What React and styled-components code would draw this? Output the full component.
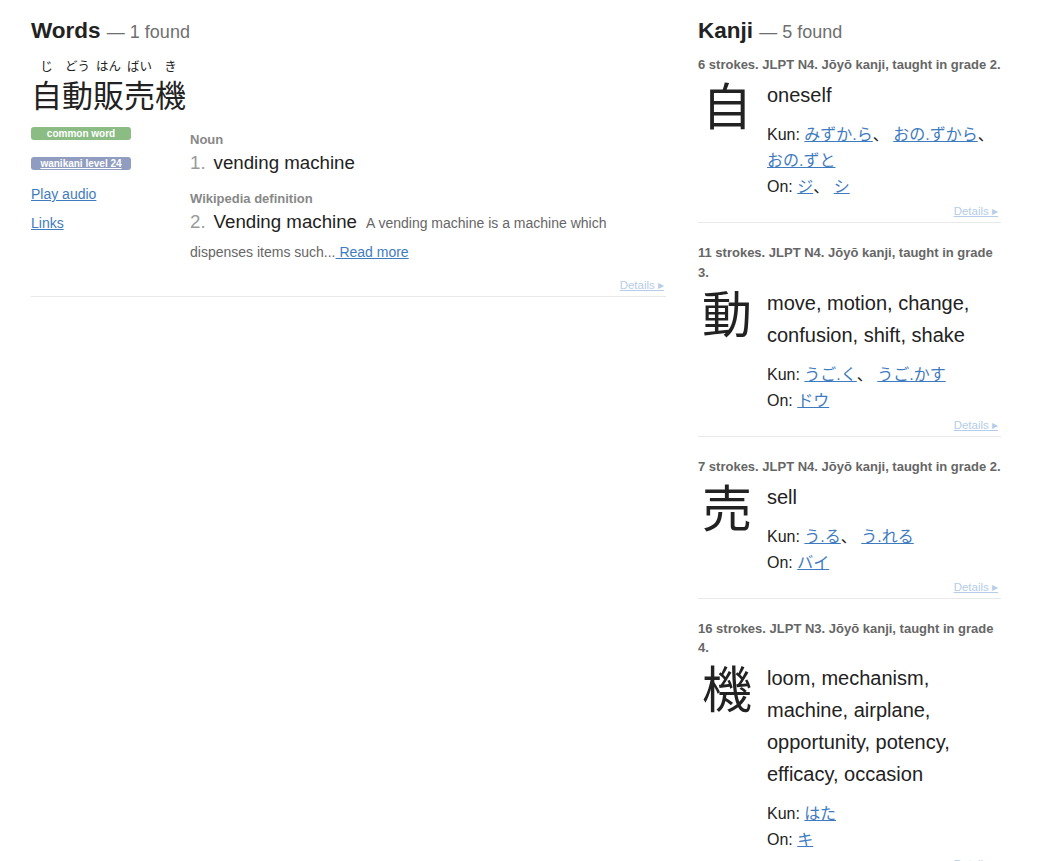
import React from "react";
import styled, { createGlobalStyle } from "styled-components";

const Global = createGlobalStyle`
  html, body { margin: 0; padding: 0; background: #fff; }
  body {
    font-family: "Liberation Sans", Arial, "Noto Sans CJK JP", sans-serif;
    color: #222;
  }
  a { color: #3f7cbf; }
`;

const Page = styled.div`
  display: grid;
  grid-template-columns: 635px 303px;
  column-gap: 32px;
  padding: 17px 0 0 31px;
  align-items: start;
`;

const Column = styled.section`
  min-width: 0;
`;

const Heading = styled.h2`
  margin: 0;
  font-size: 22.5px;
  line-height: 28px;
  font-weight: bold;
  color: #222;
`;

const Count = styled.span`
  font-size: 18px;
  font-weight: normal;
  color: #6f6f6f;
`;

/* ---------- Words ---------- */

const WordBlock = styled.article`
  border-bottom: 1px solid #e9e9e9;
  padding-bottom: 4px;
`;

const Representation = styled.div`
  margin-top: 11px;
  font-family: "Noto Sans CJK JP", sans-serif;
`;

const FuriRow = styled.div`
  display: flex;
  padding-left: 0;
  height: 18px;
`;

const Furi = styled.span`
  width: 31px;
  text-align: center;
  font-size: 12.5px;
  line-height: 18px;
  color: #222;
  white-space: nowrap;
`;

const WordText = styled.div`
  font-size: 31px;
  line-height: 38px;
  color: #222;
`;

const WordBody = styled.div`
  display: flex;
  margin-top: 14px;
`;

const Meta = styled.div`
  width: 159px;
  flex: none;
  display: flex;
  flex-direction: column;
  align-items: flex-start;
`;

const Badge = styled.span`
  display: block;
  width: 100px;
  height: 13px;
  border-radius: 3px;
  background: ${(p) => p.$bg};
  color: #fff;
  font-size: 10px;
  line-height: 13px;
  font-weight: bold;
  text-align: center;
  margin-bottom: 17px;
  text-decoration: ${(p) => (p.$link ? "underline" : "none")};
`;

const MetaLink = styled.a`
  font-size: 14px;
  line-height: 20px;
  color: #3f7cbf;
  text-decoration: underline;
  margin-top: ${(p) => p.$mt || 0}px;
`;

const Meanings = styled.div`
  flex: 1;
  padding-top: 4px;
`;

const Tag = styled.div`
  font-size: 13px;
  line-height: 18px;
  font-weight: bold;
  color: #888;
  margin-top: ${(p) => p.$mt || 0}px;
`;

const MeaningRow = styled.div`
  font-size: 18.7px;
  line-height: 28.5px;
  color: #222;
`;

const Num = styled.span`
  color: #999;
  margin-right: 8px;
`;

const Abstract = styled.span`
  font-size: 14px;
  color: #666;
  margin-left: 9px;
`;

const ReadMore = styled.a`
  font-size: 14px;
  color: #3f7cbf;
`;

const DetailsRow = styled.div`
  display: flex;
  justify-content: flex-end;
  margin-top: ${(p) => p.$mt || 0}px;
  padding-right: ${(p) => p.$pr || 2}px;
`;

const DetailsLink = styled.a`
  font-size: 11.5px;
  line-height: 13px;
  color: #b5cde7;
  text-decoration: underline;
`;

/* ---------- Kanji ---------- */

const KanjiBlock = styled.article`
  border-bottom: 1px solid #e9e9e9;
  padding-bottom: 4px;
  margin-top: ${(p) => (p.$first ? 9 : 20)}px;
`;

const Info = styled.div`
  font-size: 13px;
  line-height: 19.5px;
  font-weight: bold;
  color: #666;
`;

const KanjiRow = styled.div`
  display: flex;
  margin-top: 4.5px;
`;

const Char = styled.div`
  width: 58px;
  flex: none;
  margin-right: 11px;
  text-align: center;
  font-family: "Noto Sans CJK JP", sans-serif;
  font-size: 50px;
  line-height: 48px;
  color: #222;
`;

const KanjiDetails = styled.div`
  flex: 1;
  min-width: 0;
`;

const KanjiMeanings = styled.div`
  font-size: 20px;
  line-height: 32px;
  color: #222;
`;

const Readings = styled.div`
  margin-top: 11px;
  font-size: 16px;
  line-height: 26px;
  color: #222;
`;

const ReadingLine = styled.div`
  line-height: 26px;
`;

const Reading = styled.a`
  color: #3f7cbf;
  text-decoration: underline;
  vertical-align: top;
`;

const Sep = styled.span`
  vertical-align: top;
`;

const words = {
  furigana: ["じ", "どう", "はん", "ばい", "き"],
  text: "自動販売機",
};

const kanji = [
  {
    c: "自",
    info: "6 strokes. JLPT N4. Jōyō kanji, taught in grade 2.",
    meanings: "oneself",
    kun: ["みずか.ら", "おの.ずから", "おの.ずと"],
    on: ["ジ", "シ"],
  },
  {
    c: "動",
    info: "11 strokes. JLPT N4. Jōyō kanji, taught in grade 3.",
    meanings: "move, motion, change, confusion, shift, shake",
    kun: ["うご.く", "うご.かす"],
    on: ["ドウ"],
  },
  {
    c: "売",
    info: "7 strokes. JLPT N4. Jōyō kanji, taught in grade 2.",
    meanings: "sell",
    kun: ["う.る", "う.れる"],
    on: ["バイ"],
  },
  {
    c: "機",
    info: "16 strokes. JLPT N3. Jōyō kanji, taught in grade 4.",
    meanings: "loom, mechanism, machine, airplane, opportunity, potency, efficacy, occasion",
    kun: ["はた"],
    on: ["キ"],
  },
];

function ReadingList({ label, items }) {
  return (
    <ReadingLine>
      <Sep>{label}: </Sep>
      {items.map((r, i) => (
        <React.Fragment key={r}>
          <Reading href="#">{r}</Reading>
          {i < items.length - 1 && <Sep>、 </Sep>}
        </React.Fragment>
      ))}
    </ReadingLine>
  );
}

export default function App() {
  return (
    <>
      <Global />
      <Page>
        <Column>
          <Heading>
            Words <Count>— 1 found</Count>
          </Heading>
          <WordBlock>
            <Representation>
              <FuriRow>
                {words.furigana.map((f, i) => (
                  <Furi key={i}>{f}</Furi>
                ))}
              </FuriRow>
              <WordText>{words.text}</WordText>
            </Representation>
            <WordBody>
              <Meta>
                <Badge $bg="#8abc83">common word</Badge>
                <Badge $bg="#909dc0" $link>
                  wanikani level 24
                </Badge>
                <MetaLink href="#" $mt={-3}>Play audio</MetaLink>
                <MetaLink href="#" $mt={9}>Links</MetaLink>
              </Meta>
              <Meanings>
                <Tag>Noun</Tag>
                <MeaningRow>
                  <Num>1.</Num>vending machine
                </MeaningRow>
                <Tag $mt={12}>Wikipedia definition</Tag>
                <MeaningRow>
                  <Num>2.</Num>Vending machine
                  <Abstract>
                    A vending machine is a machine which dispenses items such...
                  </Abstract>
                  <ReadMore href="#"> Read more</ReadMore>
                </MeaningRow>
              </Meanings>
            </WordBody>
            <DetailsRow $mt={12} $pr={2}>
              <DetailsLink href="#">Details ▸</DetailsLink>
            </DetailsRow>
          </WordBlock>
        </Column>

        <Column>
          <Heading>
            Kanji <Count>— 5 found</Count>
          </Heading>
          {kanji.map((k, i) => (
            <KanjiBlock key={k.c} $first={i === 0}>
              <Info>{k.info}</Info>
              <KanjiRow>
                <Char>{k.c}</Char>
                <KanjiDetails>
                  <KanjiMeanings>{k.meanings}</KanjiMeanings>
                  <Readings>
                    <ReadingList label="Kun" items={k.kun} />
                    <ReadingList label="On" items={k.on} />
                  </Readings>
                </KanjiDetails>
              </KanjiRow>
              <DetailsRow $mt={5} $pr={3}>
                <DetailsLink href="#">Details ▸</DetailsLink>
              </DetailsRow>
            </KanjiBlock>
          ))}
        </Column>
      </Page>
    </>
  );
}
